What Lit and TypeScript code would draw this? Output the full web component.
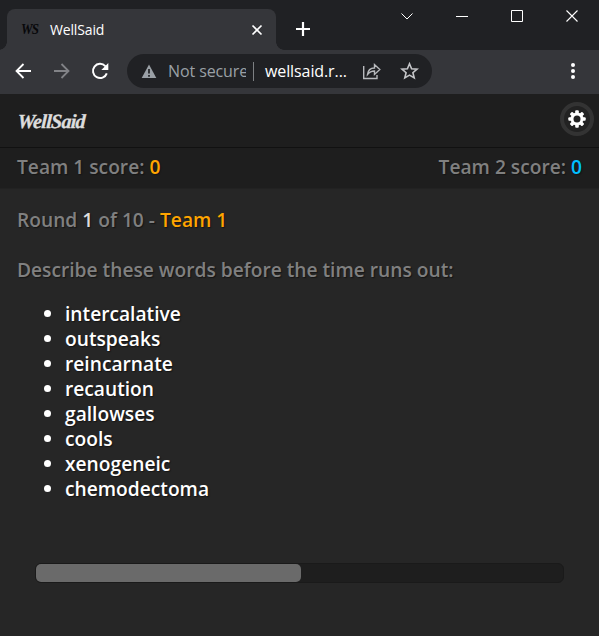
import { LitElement, html, css, svg } from "lit";
import { customElement, property } from "lit/decorators.js";

@customElement("browser-chrome")
class BrowserChrome extends LitElement {
  static styles = css`
    :host { display: block; font-family: "Open Sans", "Noto Sans", sans-serif; font-weight: 400; color: #fff; text-shadow: none; }
    svg { display: block; fill: none; stroke: #fff; flex: none; }
    .strip { height: 50px; background: #202124; display: flex; box-sizing: border-box; }
    .tab {
      position: relative; width: 269px; height: 41px; margin: 9px 0 0 7px; box-sizing: border-box;
      background: #35363a; border-radius: 8px 8px 0 0; display: flex; align-items: center; padding: 0 13px 0 14px;
    }
    .tab::before, .tab::after {
      content: ""; position: absolute; bottom: 0; width: 8px; height: 8px;
    }
    .tab::before { left: -8px; background: radial-gradient(circle at 0 0, transparent 7.5px, #35363a 8px); }
    .tab::after { right: -8px; background: radial-gradient(circle at 100% 0, transparent 7.5px, #35363a 8px); }
    .fav { width: 20px; font: italic bold 14px/16px "Liberation Serif", serif; letter-spacing: -1px; color: #08080a; }
    .fav span { display: inline-block; transform: scaleX(.93); transform-origin: left; }
    .title { font-size: 14px; line-height: 20px; letter-spacing: -.15px; margin-left: 9px; flex: 1; }
    .plus { margin: 21px 0 0 19px; }
    .win { margin-left: auto; display: flex; gap: 39px; padding: 8px 19px 0 0; }
    .bar { height: 44px; background: #35363a; display: flex; align-items: center; box-sizing: border-box; padding: 0 19px 2px 13px; }
    .nav { display: flex; gap: 18px; width: 114px; }
    .omni {
      width: 305px; height: 34px; border-radius: 17px; background: #202124; display: flex; align-items: center;
      box-sizing: border-box; padding-left: 14px; font-size: 16px;
    }
    .secure { width: 78px; margin-left: 11px; overflow: hidden; white-space: nowrap; color: #9aa0a6; letter-spacing: -.1px; line-height: 24px; }
    .sep { width: 1px; height: 19px; background: #7d8083; margin: 0 11px 0 7px; }
    .url { width: 97px; white-space: nowrap; letter-spacing: -.1px; line-height: 24px; }
    .star { margin-left: 18px; }
    .dots { margin-left: auto; }
  `;
  render() {
    return html`
      <div class="strip">
        <div class="tab">
          <div class="fav"><span>WS</span></div>
          <div class="title">WellSaid</div>
          <svg width="12" height="12" stroke-width="1.7"><path d="M1.500 1.500l9 9m0-9l-9 9" /></svg>
        </div>
        <svg class="plus" width="16" height="16"><path d="M8 1v14M1 8h14" stroke-width="2.200" /></svg>
        <div class="win">
          <svg width="16" height="16"><path d="M2.500 5.500l5.500 5.500 5.500-5.500" /></svg>
          <svg width="16" height="16"><path d="M2 8.500h12" /></svg>
          <svg width="16" height="16"><path d="M2.500 2.500h11v11h-11z" /></svg>
          <svg width="16" height="16"><path d="M2.500 2.500l11 11m0-11l-11 11" stroke-width="1.100" /></svg>
        </div>
      </div>
      <div class="bar">
        <div class="nav">
          <svg width="20" height="20" stroke-width="1.8"><path d="M18 10H3.500M10.500 3L3.500 10l7 7" /></svg>
          <svg width="20" height="20" stroke-width="1.8"><path d="M3 10h14.500M10.500 3l7 7-7 7" stroke="#828387" /></svg>
          <svg width="22" height="20" stroke-width="2"><path d="M17.800 12.300A7.100 7.100 0 1 1 16.300 5.100L17.500 6.300" /><path d="M19.300 2v7h-7z" fill="#fff" stroke="none" /></svg>
        </div>
        <div class="omni">
          <svg width="16" height="16"><path d="M8 1.500L15.300 15H.7z" fill="#9aa0a6" stroke="none" /><path d="M8 6v4.500M8 12v1.800" stroke="#202124" stroke-width="1.700" /></svg>
          <div class="secure">Not secure</div>
          <div class="sep"></div>
          <div class="url">wellsaid.r...</div>
          <svg width="20" height="20"><g stroke="#b8babd" stroke-width="1.400"><path d="M1.700 5v12.500H15v-3.500" /><path d="M5.500 13.500c.5-4.500 3-6.500 7-6.500V3.500l5.300 5-5.300 5V10c-3 0-5 1-7 3.500z" /></g></svg>
          <svg class="star" width="20" height="20"><path d="M9.500 2.800l2.100 5 5.400.4-4.100 3.500 1.300 5.200-4.700-2.800-4.700 2.800 1.300-5.200L2 8.200l5.400-.4z" stroke="#c5c6c9" stroke-width="1.600" /></svg>
        </div>
        <svg class="dots" width="14" height="20"><g fill="#fff" stroke="none"><circle cx="7" cy="4" r="2" /><circle cx="7" cy="10" r="2" /><circle cx="7" cy="16" r="2" /></g></svg>
      </div>`;
  }
}

@customElement("timer-bar")
class TimerBar extends LitElement {
  @property({ type: Number }) value = 0;
  static styles = css`
    :host { display: block; height: 20px; box-sizing: border-box; border: 1px solid #1a1a1a; border-radius: 6px; background: #1e1e1e; }
    .fill { height: 18px; border-radius: 5px; background: #6a6a6a; }
  `;
  render() {
    return html`<div class="fill" style="width:${this.value}%"></div>`;
  }
}

@customElement("app-root")
class AppRoot extends LitElement {
  words = ["intercalative", "outspeaks", "reincarnate", "recaution", "gallowses", "cools", "xenogeneic", "chemodectoma"];
  static styles = css`
    :host {
      display: block; height: 636px; overflow: hidden; background: #262626; color: #808080;
      font: 600 19.2px/25px "Open Sans", "Noto Sans", sans-serif; text-shadow: 1px 1px 1px #151515;
    }
    header { height: 53px; background: #1e1e1e; display: flex; justify-content: space-between; align-items: flex-start; padding: 0 5px 0 17px; border-bottom: 1px solid #111; }
    .logo {
      font: italic bold 20px/24px "Liberation Serif", serif; letter-spacing: -.7px; color: #ddd; margin-top: 15px;
      -webkit-text-stroke: .35px #ddd; text-shadow: none; transform: skewX(-3deg); transform-origin: left bottom;
    }
    .gear { width: 34px; height: 34px; box-sizing: border-box; border: 4px solid #333; border-radius: 50%; margin-top: 8px; display: grid; place-items: center; background: #222; }
    .gear svg { display: block; }
    .scores { height: 41px; box-sizing: border-box; background: #1e1e1e; display: flex; justify-content: space-between; padding: 6px 17px 0; border-bottom: 1px solid #222; }
    .one { color: #ffa500; }
    .two { color: #00bfff; }
    .num { color: #ddd; }
    main { padding: 18px 17px 0; }
    p { margin: 0 0 25px; }
    ul { margin: -6px 0 0; padding: 0 0 0 48px; color: #fff; }
    timer-bar { margin: 62px 18px 0; }
  `;
  private gear() {
    return html`<svg width="20" height="20" viewBox="-10 -10 20 20">
      ${[0, 45, 90, 135].map((a) => svg`<rect x="-1.800" y="-8.700" width="3.600" height="17.400" rx="1" fill="#fff" transform="rotate(${a})" />`)}
      <circle r="6.500" fill="#fff" /><circle r="3.500" fill="#222" />
    </svg>`;
  }
  render() {
    return html`
      <browser-chrome></browser-chrome>
      <header><div class="logo">WellSaid</div><div class="gear">${this.gear()}</div></header>
      <div class="scores">
        <div>Team 1 score: <span class="one">0</span></div>
        <div>Team 2 score: <span class="two">0</span></div>
      </div>
      <main>
        <p>Round <span class="num">1</span> of 10 - <span class="one">Team 1</span></p>
        <p>Describe these words before the time runs out:</p>
        <ul>${this.words.map((w) => html`<li>${w}</li>`)}</ul>
        <timer-bar .value=${50.3}></timer-bar>
      </main>`;
  }
}
